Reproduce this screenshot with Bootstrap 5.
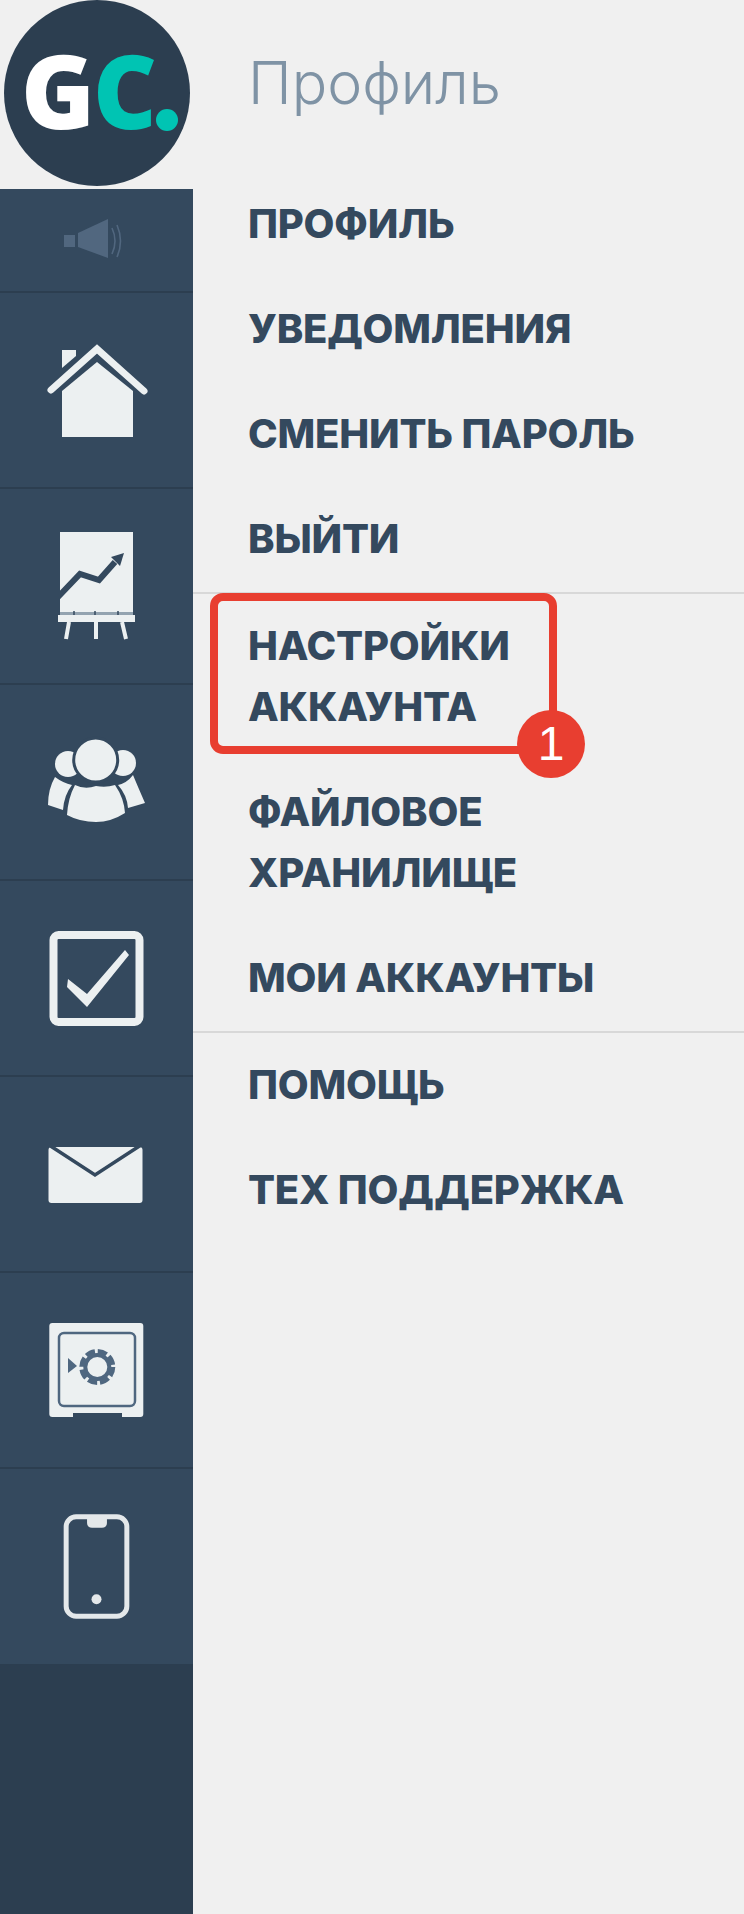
<!DOCTYPE html>
<html lang="en">
<head>
    <meta charset="UTF-8">
    <meta name="viewport" content="width=device-width, initial-scale=1">
    <title>Профиль</title>
    <link href="https://cdn.jsdelivr.net/npm/bootstrap@5.3.0/dist/css/bootstrap.min.css" rel="stylesheet">
    <style>
        body { background: #f0f0f0; min-height: 1914px; font-family: "Inter", "Liberation Sans", sans-serif; }
        .side-col { width: 193px; flex: none; }
        .logo-box { height: 189px; }
        .logo-box svg { display: block; }
        .rail { background: #2c3e50; height: 1725px; }
        .rail-row { background: #34495e; border-bottom: 2px solid #2c3e50; height: 196px; }
        .rail-row svg { display: block; width: 193px; height: 194px; }
        .rail-row.sound { height: 104px; }
        .rail-row.sound svg { height: 102px; }
        .rail-row.last { border-bottom: 0; height: 195px; }
        .page-title { height: 172px; padding: 49px 0 0 55px; font-size: 59px; line-height: 68px; font-weight: 300; color: #7f93a5; margin: 0; }
        .menu-group { border-bottom: 2px solid #d8d8d8; }
        .menu-group:last-child { border-bottom: 0; }
        .menu-link { display: block; padding: 21px 40px 23px 55px; font-size: 40px; line-height: 61px; font-weight: 800; letter-spacing: -.2px; color: #34495e; text-transform: uppercase; text-decoration: none; }
        .callout-frame { position: absolute; left: 17px; top: -1px; width: 347px; height: 161px; border: 8px solid #e83e30; border-radius: 13px; }
        .callout-num { position: absolute; right: -36px; bottom: -32px; width: 68px; height: 68px; border-radius: 50%; background: #e83e30; color: #fff; font-size: 48px; line-height: 68px; text-align: center; font-family: "Liberation Sans", sans-serif; }
    </style>
</head>
<body class="d-flex">

    <div class="side-col">
        <div class="logo-box">
            <svg width="193" height="189" viewBox="0 0 193 189">
                <circle cx="97" cy="93" r="93" fill="#2c3e50"/>
                <text x="21" y="129" font-family="Open Sans" font-weight="800" font-size="102" fill="#fff" textLength="74" lengthAdjust="spacingAndGlyphs">G</text>
                <text x="93" y="129" font-family="Open Sans" font-weight="800" font-size="102" fill="#00c4b3" textLength="64" lengthAdjust="spacingAndGlyphs">C</text>
                <circle cx="167" cy="120" r="11" fill="#00c4b3"/>
            </svg>
        </div>
        <div class="rail">
            <div class="rail-row sound">
                <svg viewBox="0 189 193 102">
                    <rect x="64" y="235" width="11" height="12" fill="#51677f"/>
                    <polygon points="78,233 108,219 108,258 78,247" fill="#51677f"/>
                    <path d="M112 228q6 13 0 26M117 225q7 16 0 32" fill="none" stroke="#51677f" stroke-width="1.6"/>
                </svg>
            </div>
            <div class="rail-row">
                <svg viewBox="0 293 193 194" fill="#ecf0f1">
                    <polygon points="62,350 76,350 76,356 62,368"/>
                    <polyline points="51,390 97,349 144,391" fill="none" stroke="#ecf0f1" stroke-width="7" stroke-linecap="round"/>
                    <polygon points="62,391 97,362 133,391 133,437 62,437"/>
                </svg>
            </div>
            <div class="rail-row">
                <svg viewBox="0 489 193 194" fill="#ecf0f1">
                    <rect x="60" y="532" width="73" height="80"/>
                    <polyline points="58,597 80,574 99,580 115,562" fill="none" stroke="#34495e" stroke-width="6"/>
                    <polygon points="124,553 111,557 120,566" fill="#34495e"/>
                    <rect x="60" y="612" width="73" height="3" fill="#93a3b0"/>
                    <path d="M74 611v4M95 611v4M118 611v4" stroke="#34495e" stroke-width="1.5"/>
                    <rect x="58" y="615" width="77" height="7"/>
                    <path d="M69 622l-3 17M96 622v17M122 622l4 17" stroke="#ecf0f1" stroke-width="4" fill="none"/>
                </svg>
            </div>
            <div class="rail-row">
                <svg viewBox="0 685 193 194" fill="#ecf0f1">
                    <circle cx="68" cy="764" r="13"/>
                    <circle cx="123" cy="763" r="13"/>
                    <path d="M55 777q8 6 17 8q-8 10-9 25l-15-5q0-16 7-28z"/>
                    <path d="M133 775q5 12 12 28l-17 5q-1-13-10-23q9-2 15-10z"/>
                    <circle cx="95.7" cy="760" r="22" stroke="#34495e" stroke-width="3"/>
                    <path d="M75 785q10 5 21 1q10 2 19-1q9 13 10 28q-14 9-29 9q-16 0-29-7q1-17 8-30z"/>
                </svg>
            </div>
            <div class="rail-row">
                <svg viewBox="0 881 193 194" fill="#ecf0f1">
                    <rect x="53.5" y="935" width="86" height="87" rx="5" fill="none" stroke="#ecf0f1" stroke-width="8"/>
                    <polygon points="68,979 87,994 125,950 129,955 87,1007 67,987"/>
                </svg>
            </div>
            <div class="rail-row">
                <svg viewBox="0 1077 193 194" fill="#ecf0f1">
                    <rect x="48.5" y="1147" width="94" height="56" rx="3"/>
                    <polyline points="49,1145 95,1175 141,1145" fill="none" stroke="#34495e" stroke-width="3.5"/>
                </svg>
            </div>
            <div class="rail-row">
                <svg viewBox="0 1273 193 194" fill="#ecf0f1">
                    <rect x="49.3" y="1323" width="94" height="94" rx="3"/>
                    <rect x="73" y="1413" width="49" height="4" fill="#34495e"/>
                    <rect x="59" y="1333" width="76" height="73" rx="5" fill="none" stroke="#4f6780" stroke-width="2.5"/>
                    <polygon points="68,1358 68,1373 77,1366" fill="#4f6780"/>
                    <circle cx="97.3" cy="1367" r="12" fill="none" stroke="#4f6780" stroke-width="4"/>
                    <circle cx="97.3" cy="1367" r="15" fill="none" stroke="#4f6780" stroke-width="6" stroke-dasharray="9 2.78"/>
                </svg>
            </div>
            <div class="rail-row last">
                <svg viewBox="0 1468 193 195" fill="none">
                    <rect x="66" y="1516" width="61" height="100" rx="10" stroke="#e4e8ea" stroke-width="5"/>
                    <path d="M87 1516h20v6q0 5-5 5h-10q-5 0-5-5z" fill="#e4e8ea"/>
                    <circle cx="96.5" cy="1599" r="5" fill="#e4e8ea"/>
                </svg>
            </div>
        </div>
    </div>

    <div class="flex-grow-1">
        <h1 class="page-title">Профиль</h1>
        <nav class="menu-group">
            <a class="menu-link" href="#">Профиль</a>
            <a class="menu-link" href="#">Уведомления</a>
            <a class="menu-link" href="#">Сменить пароль</a>
            <a class="menu-link" href="#">Выйти</a>
        </nav>
        <nav class="menu-group">
            <div class="position-relative">
                <a class="menu-link" href="#">Настройки<br>аккаунта</a>
                <div class="callout-frame"><span class="callout-num">1</span></div>
            </div>
            <a class="menu-link" href="#">Файловое<br>хранилище</a>
            <a class="menu-link" href="#">Мои аккаунты</a>
        </nav>
        <nav class="menu-group">
            <a class="menu-link" href="#">Помощь</a>
            <a class="menu-link" href="#">Тех поддержка</a>
        </nav>
    </div>

    <script src="https://cdn.jsdelivr.net/npm/bootstrap@5.3.0/dist/js/bootstrap.bundle.min.js"></script>
</body>
</html>
